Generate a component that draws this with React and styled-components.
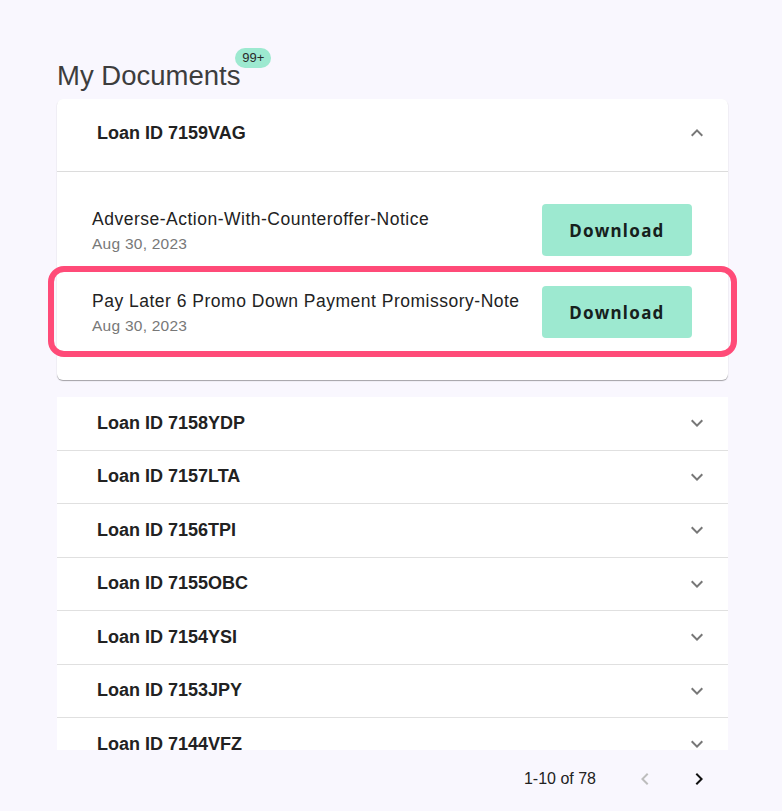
import React from 'react';
import styled, { createGlobalStyle } from 'styled-components';

const GlobalStyle = createGlobalStyle`
  html, body {
    margin: 0;
    padding: 0;
    background: #f9f7fe;
  }
  body {
    font-family: 'Liberation Sans', Arial, sans-serif;
    color: #222;
  }
`;

const Page = styled.div`
  padding: 60px 54px 0 57px;
  height: 811px;
  box-sizing: border-box;
`;

const TitleRow = styled.div`
  margin-bottom: 7px;
`;

const Title = styled.h1`
  position: relative;
  display: inline-block;
  margin: 0;
  font-size: 27.5px;
  line-height: 32px;
  font-weight: 400;
  color: #3d3d3d;
`;

const Badge = styled.span`
  position: absolute;
  top: -12px;
  right: -31px;
  width: 36px;
  height: 20px;
  border-radius: 10px;
  background: #9de9d0;
  color: #2a2a2a;
  font-size: 13px;
  line-height: 20px;
  text-align: center;
`;

const ScrollArea = styled.div`
  height: 651px;
  margin: 0 -10px;
  padding: 0 10px;
  overflow: hidden;
`;

const Accordion = styled.section`
  background: #fff;
  border-radius: ${p => (p.$expanded ? '6px' : '0')};
  box-shadow: ${p => (p.$expanded ? '0 1px 1px rgba(0,0,0,0.35)' : 'none')};
  margin-bottom: ${p => (p.$expanded ? '17px' : '0')};
  & + & {
    border-top: ${p => (p.$expanded ? 'none' : '1px solid #e0e0e0')};
  }
  &:nth-child(2) {
    border-top: none;
  }
`;

const Summary = styled.div`
  display: flex;
  align-items: center;
  justify-content: space-between;
  box-sizing: border-box;
  height: ${p => (p.$expanded ? '73px' : '52.5px')};
  padding: ${p => (p.$expanded ? '0 19px 4px 40px' : '0 19px 0 40px')};
  border-bottom: ${p => (p.$expanded ? '1px solid #dcdcdc' : 'none')};
  font-size: 18px;
  font-weight: 700;
  color: #222;
  cursor: pointer;
`;

const Chevron = styled.svg`
  width: 24px;
  height: 24px;
  fill: #777;
  transform: ${p => (p.$up ? 'rotate(180deg)' : 'none')};
`;

const Details = styled.div`
  padding: 17px 36px 27px 35px;
`;

const DocRow = styled.div`
  position: relative;
  display: flex;
  align-items: center;
  justify-content: space-between;
  height: 82px;
  ${p =>
    p.$highlight &&
    `
    &::after {
      content: '';
      position: absolute;
      top: -5px;
      bottom: -4px;
      left: -44px;
      right: -45px;
      border: 6px solid #ff4b78;
      border-radius: 16px;
      pointer-events: none;
    }
  `}
`;

const DocInfo = styled.div`
  display: flex;
  flex-direction: column;
  gap: 5px;
  padding-top: 1px;
`;

const DocName = styled.div`
  font-size: 17.5px;
  letter-spacing: 0.5px;
  color: #222;
`;

const DocDate = styled.div`
  font-size: 15.5px;
  letter-spacing: 0.25px;
  color: #787878;
`;

const DownloadButton = styled.button`
  width: 150px;
  height: 52px;
  border: none;
  border-radius: 4px;
  background: #9de9d0;
  color: #16201c;
  font-family: 'Noto Sans', 'DejaVu Sans', sans-serif;
  font-weight: 700;
  font-size: 17px;
  letter-spacing: 1.3px;
  cursor: pointer;
`;

const Pagination = styled.div`
  display: flex;
  align-items: center;
  justify-content: flex-end;
  height: 58px;
  padding-right: 17px;
  padding-bottom: 3px;
`;

const PageCount = styled.span`
  font-size: 16px;
  color: #222;
  margin-right: 37px;
`;

const PageButton = styled.button`
  display: flex;
  align-items: center;
  justify-content: center;
  width: 24px;
  height: 24px;
  padding: 0;
  border: none;
  background: none;
  cursor: ${p => (p.disabled ? 'default' : 'pointer')};
  & + & {
    margin-left: 30px;
  }
  svg {
    width: 24px;
    height: 24px;
    fill: ${p => (p.disabled ? '#bdbdbd' : '#111')};
  }
`;

const ExpandIcon = ({ up }) => (
  <Chevron $up={up} viewBox="0 0 24 24">
    <path d="M16.59 8.59 12 13.17 7.41 8.59 6 10l6 6 6-6z" />
  </Chevron>
);

const loans = ['7158YDP', '7157LTA', '7156TPI', '7155OBC', '7154YSI', '7153JPY', '7144VFZ'];

const docs = [
  { name: 'Adverse-Action-With-Counteroffer-Notice', date: 'Aug 30, 2023' },
  { name: 'Pay Later 6 Promo Down Payment Promissory-Note', date: 'Aug 30, 2023', highlight: true },
];

export default function App() {
  return (
    <Page>
      <GlobalStyle />
      <TitleRow>
        <Title>
          My Documents
          <Badge>99+</Badge>
        </Title>
      </TitleRow>
      <ScrollArea>
        <Accordion $expanded>
          <Summary $expanded>
            Loan ID 7159VAG
            <ExpandIcon up />
          </Summary>
          <Details>
            {docs.map(d => (
              <DocRow key={d.name} $highlight={d.highlight}>
                <DocInfo>
                  <DocName>{d.name}</DocName>
                  <DocDate>{d.date}</DocDate>
                </DocInfo>
                <DownloadButton>Download</DownloadButton>
              </DocRow>
            ))}
          </Details>
        </Accordion>
        {loans.map(id => (
          <Accordion key={id}>
            <Summary>
              Loan ID {id}
              <ExpandIcon />
            </Summary>
          </Accordion>
        ))}
      </ScrollArea>
      <Pagination>
        <PageCount>1-10 of 78</PageCount>
        <PageButton disabled>
          <svg viewBox="0 0 24 24">
            <path d="M15.41 7.41 14 6l-6 6 6 6 1.41-1.41L10.83 12z" />
          </svg>
        </PageButton>
        <PageButton>
          <svg viewBox="0 0 24 24">
            <path d="M10 6 8.59 7.41 13.17 12l-4.58 4.59L10 18l6-6z" />
          </svg>
        </PageButton>
      </Pagination>
    </Page>
  );
}
